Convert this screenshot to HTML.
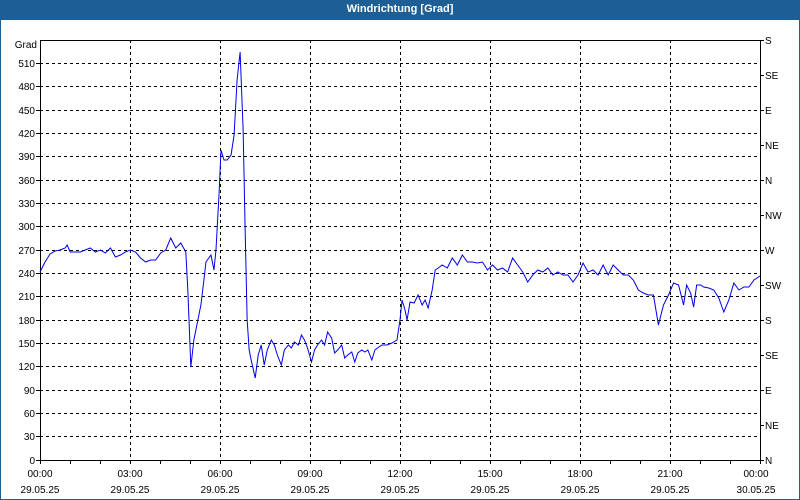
<!DOCTYPE html>
<html><head><meta charset="utf-8"><style>
html,body{margin:0;padding:0;background:#fff}
body{width:800px;height:500px;overflow:hidden;position:relative;font-family:"Liberation Sans",sans-serif}
.frame{position:absolute;left:0;top:0;width:798px;height:498px;border:1px solid #1d5e94}
.title{position:absolute;left:0;top:0;width:800px;height:20px;background:#1d5e94;color:#fff;font-weight:bold;font-size:11px;line-height:19px;text-align:center}
svg{position:absolute;left:0;top:0}
text{font-family:"Liberation Sans",sans-serif;font-size:10px;fill:#000}
</style></head><body>
<div class="frame"></div>
<div class="title">Windrichtung [Grad]</div>
<svg width="800" height="500" viewBox="0 0 800 500">
<g stroke="#000" stroke-width="1" stroke-dasharray="3,3" shape-rendering="crispEdges">
<line x1="40" x2="760" y1="63.5" y2="63.5"/><line x1="40" x2="760" y1="86.5" y2="86.5"/><line x1="40" x2="760" y1="110.5" y2="110.5"/><line x1="40" x2="760" y1="133.5" y2="133.5"/><line x1="40" x2="760" y1="156.5" y2="156.5"/><line x1="40" x2="760" y1="180.5" y2="180.5"/><line x1="40" x2="760" y1="203.5" y2="203.5"/><line x1="40" x2="760" y1="226.5" y2="226.5"/><line x1="40" x2="760" y1="250.5" y2="250.5"/><line x1="40" x2="760" y1="273.5" y2="273.5"/><line x1="40" x2="760" y1="296.5" y2="296.5"/><line x1="40" x2="760" y1="320.5" y2="320.5"/><line x1="40" x2="760" y1="343.5" y2="343.5"/><line x1="40" x2="760" y1="366.5" y2="366.5"/><line x1="40" x2="760" y1="390.5" y2="390.5"/><line x1="40" x2="760" y1="413.5" y2="413.5"/><line x1="40" x2="760" y1="436.5" y2="436.5"/>
<line x1="130.5" x2="130.5" y1="40" y2="460"/><line x1="220.5" x2="220.5" y1="40" y2="460"/><line x1="310.5" x2="310.5" y1="40" y2="460"/><line x1="400.5" x2="400.5" y1="40" y2="460"/><line x1="490.5" x2="490.5" y1="40" y2="460"/><line x1="580.5" x2="580.5" y1="40" y2="460"/><line x1="670.5" x2="670.5" y1="40" y2="460"/>
</g>
<g stroke="#000" stroke-width="1" fill="none" shape-rendering="crispEdges">
<rect x="40.5" y="40.5" width="720" height="420"/>
<path d="M760 40.5h4M760 75.5h4M760 110.5h4M760 145.5h4M760 180.5h4M760 215.5h4M760 250.5h4M760 285.5h4M760 320.5h4M760 355.5h4M760 390.5h4M760 425.5h4M760 460.5h4"/>
<path d="M36 63.5h4M36 86.5h4M36 110.5h4M36 133.5h4M36 156.5h4M36 180.5h4M36 203.5h4M36 226.5h4M36 250.5h4M36 273.5h4M36 296.5h4M36 320.5h4M36 343.5h4M36 366.5h4M36 390.5h4M36 413.5h4M36 436.5h4M36 460.5h4"/>
<path d="M40.5 460v4M70.5 460v4M100.5 460v4M130.5 460v4M160.5 460v4M190.5 460v4M220.5 460v4M250.5 460v4M280.5 460v4M310.5 460v4M340.5 460v4M370.5 460v4M400.5 460v4M430.5 460v4M460.5 460v4M490.5 460v4M520.5 460v4M550.5 460v4M580.5 460v4M610.5 460v4M640.5 460v4M670.5 460v4M700.5 460v4M730.5 460v4M760.5 460v4"/>
</g>
<g text-anchor="end">
<text x="37" y="48">Grad</text>
<text x="35" y="67">510</text><text x="35" y="90">480</text><text x="35" y="114">450</text><text x="35" y="137">420</text><text x="35" y="160">390</text><text x="35" y="184">360</text><text x="35" y="207">330</text><text x="35" y="230">300</text><text x="35" y="254">270</text><text x="35" y="277">240</text><text x="35" y="300">210</text><text x="35" y="324">180</text><text x="35" y="347">150</text><text x="35" y="370">120</text><text x="35" y="394">90</text><text x="35" y="417">60</text><text x="35" y="440">30</text><text x="35" y="464">0</text>
</g>
<g>
<text x="765" y="44">S</text><text x="765" y="79">SE</text><text x="765" y="114">E</text><text x="765" y="149">NE</text><text x="765" y="184">N</text><text x="765" y="219">NW</text><text x="765" y="254">W</text><text x="765" y="289">SW</text><text x="765" y="324">S</text><text x="765" y="359">SE</text><text x="765" y="394">E</text><text x="765" y="429">NE</text><text x="765" y="464">N</text>
</g>
<g text-anchor="middle">
<text x="40" y="477">00:00</text><text x="40" y="493">29.05.25</text>
<text x="130" y="477">03:00</text><text x="130" y="493">29.05.25</text>
<text x="220" y="477">06:00</text><text x="220" y="493">29.05.25</text>
<text x="310" y="477">09:00</text><text x="310" y="493">29.05.25</text>
<text x="400" y="477">12:00</text><text x="400" y="493">29.05.25</text>
<text x="490" y="477">15:00</text><text x="490" y="493">29.05.25</text>
<text x="580" y="477">18:00</text><text x="580" y="493">29.05.25</text>
<text x="670" y="477">21:00</text><text x="670" y="493">29.05.25</text>
<text x="756" y="477">00:00</text><text x="756" y="493">30.05.25</text>
</g>
<polyline transform="translate(40,0) scale(1.0056,1) translate(-40,0)" fill="none" stroke="#0000ee" stroke-width="1" points="40,272 45,262 50,254 55,251 60,250 65,248 67,245 70,252 75,252 80,252 85,250 90,248 95,252 100,250 105,253 110,248 115,257 120,255 125,252 130,250 135,252 140,258 145,262 150,260 155,260 160,253 165,250 170,238 175,248 180,243 185,252 187,290 190,367 193,340 197,320 200,305 203,280 205,262 210,255 213,270 215,250 218,195 220,150 223,160 226,160 230,155 233,135 236,80 239,52 242,130 244,230 246,320 248,350 250,360 254,378 257,355 260,345 263,365 266,350 270,340 273,345 276,355 280,365 283,350 287,345 290,348 293,342 297,345 300,335 303,340 306,348 310,362 313,350 316,345 320,340 323,345 326,332 330,338 333,353 336,350 340,345 343,358 346,355 350,352 353,362 356,353 360,350 363,352 366,350 370,360 373,350 377,347 380,345 385,345 390,343 395,340 398,320 400,300 403,310 405,320 408,302 412,303 416,295 420,305 423,300 426,308 430,290 433,270 436,268 440,265 445,268 450,258 455,265 460,255 465,262 470,262 475,263 480,262 485,270 490,265 495,270 500,268 505,272 510,258 515,265 520,272 525,282 530,275 535,270 540,272 545,268 550,275 555,272 560,275 565,275 570,282 575,275 580,263 585,272 590,270 595,275 600,265 605,275 610,265 615,270 620,275 625,275 630,280 635,290 640,293 645,295 650,295 655,325 660,305 665,295 670,283 675,285 680,305 683,285 687,293 690,307 693,285 697,285 700,287 705,288 710,290 715,298 720,312 725,300 730,283 735,290 740,287 745,287 750,280 756,276"/>
</svg>
</body></html>
